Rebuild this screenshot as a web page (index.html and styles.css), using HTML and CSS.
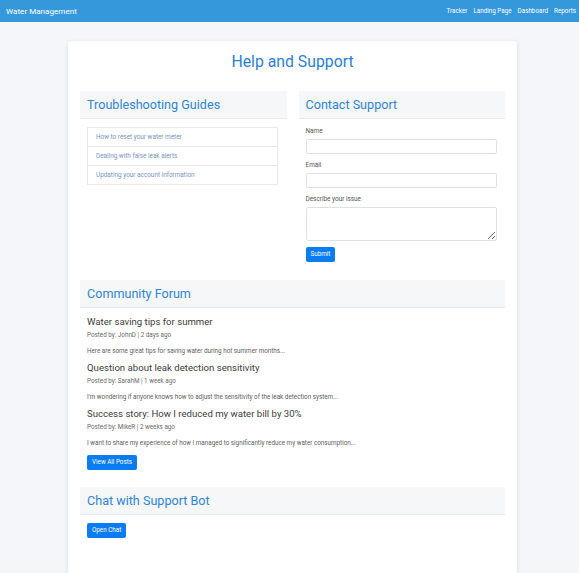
FILE: index.html
```html
<!DOCTYPE html>
<html lang="en">
<head>
<meta charset="utf-8">
<title>Help and Support</title>
<link rel="stylesheet" href="styles.css">
</head>
<body>
<nav class="navbar">
  <span class="brand">Water Management</span>
  <ul class="nav-links">
    <li>Tracker</li>
    <li>Landing Page</li>
    <li>Dashboard</li>
    <li>Reports</li>
  </ul>
</nav>
<div class="wrapper">
  <main class="card">
    <h1 class="page-title">Help and Support</h1>
    <div class="row">
      <section class="section">
        <h2 class="section-header">Troubleshooting Guides</h2>
        <div class="section-body">
          <ul class="guide-list">
            <li>How to reset your water meter</li>
            <li>Dealing with false leak alerts</li>
            <li>Updating your account information</li>
          </ul>
        </div>
      </section>
      <section class="section">
        <h2 class="section-header">Contact Support</h2>
        <form class="section-body form">
          <label class="label">Name</label>
          <input class="input" type="text">
          <label class="label">Email</label>
          <input class="input" type="email">
          <label class="label">Describe your issue</label>
          <textarea class="input textarea"></textarea>
          <div><button class="btn" type="button">Submit</button></div>
        </form>
      </section>
    </div>
    <section class="section forum">
      <h2 class="section-header">Community Forum</h2>
      <div class="section-body">
        <article class="post">
          <h3 class="post-title">Water saving tips for summer</h3>
          <p class="post-meta">Posted by: JohnD | 2 days ago</p>
          <p class="post-text">Here are some great tips for saving water during hot summer months...</p>
        </article>
        <article class="post">
          <h3 class="post-title">Question about leak detection sensitivity</h3>
          <p class="post-meta">Posted by: SarahM | 1 week ago</p>
          <p class="post-text">I'm wondering if anyone knows how to adjust the sensitivity of the leak detection system...</p>
        </article>
        <article class="post">
          <h3 class="post-title">Success story: How I reduced my water bill by 30%</h3>
          <p class="post-meta">Posted by: MikeR | 2 weeks ago</p>
          <p class="post-text">I want to share my experience of how I managed to significantly reduce my water consumption...</p>
        </article>
        <button class="btn" type="button">View All Posts</button>
      </div>
    </section>
    <section class="section chat">
      <h2 class="section-header">Chat with Support Bot</h2>
      <div class="section-body">
        <button class="btn" type="button">Open Chat</button>
      </div>
    </section>
  </main>
</div>
</body>
</html>
```
FILE: styles.css
```css
* { box-sizing: border-box; }
html, body { margin: 0; padding: 0; }
body {
  background: #f4f6f9;
  font-family: Roboto, "Liberation Sans", sans-serif;
  color: #333;
}
.navbar {
  height: 22px;
  background: #3498db;
  display: flex;
  align-items: center;
  justify-content: space-between;
  padding: 0 3px 0 6px;
  color: #fff;
}
.brand { font-size: 8.1px; }
.nav-links {
  list-style: none;
  margin: 0;
  padding: 0;
  display: flex;
  gap: 6px;
  font-size: 6.3px;
}
.wrapper { padding: 19px 0 0 6px; }
.card {
  width: 449px;
  margin: 0 auto;
  background: #fff;
  border-radius: 3px;
  box-shadow: 0 1px 4px rgba(0,0,0,0.12);
  padding: 11px 12px 40px;
}
.page-title {
  margin: 0;
  text-align: center;
  font-weight: 400;
  font-size: 15.8px;
  line-height: 20px;
  color: #2b7fd2;
}
.row {
  display: grid;
  grid-template-columns: 1fr 1fr;
  gap: 12px;
  margin-top: 19px;
}
.section-header {
  margin: 0;
  height: 28px;
  line-height: 27px;
  padding: 0 7px;
  font-size: 12.6px;
  font-weight: 400;
  color: #2f84d4;
  background: #f5f7f9;
  border-bottom: 1px solid #e6e9ec;
}
.section-body { padding: 0 8px 0 7px; }
.guide-list {
  list-style: none;
  margin: 8px 1px 0 0;
  padding: 0;
  border: 1px solid #e8e8e8;
  border-bottom: none;
}
.guide-list li {
  height: 19px;
  line-height: 18px;
  padding: 0 8px;
  font-size: 6.4px;
  color: #7896bd;
  border-bottom: 1px solid #e8e8e8;
}
.form { display: flex; flex-direction: column; }
.label {
  font-size: 6.4px;
  line-height: 8px;
  color: #555;
  margin-top: 7px;
}
.form .label:first-child { margin-top: 8px; }
.input {
  display: block;
  margin-top: 4px;
  height: 15px;
  width: 100%;
  border: 1px solid #dde1e6;
  border-radius: 2px;
  background: #fff;
  padding: 0;
  font: inherit;
}
.textarea { height: 34px; resize: vertical; }
.btn {
  display: inline-block;
  border: none;
  border-radius: 2px;
  background: #0a7cf2;
  color: #fff;
  font-family: inherit;
  font-size: 6.3px;
  height: 15px;
  line-height: 15px;
  padding: 0 5px;
  cursor: pointer;
}
.form .btn { margin-top: 6px; }
.forum { margin-top: 18px; }
.post-title {
  margin: 8px 0 0;
  font-size: 9.6px;
  line-height: 12px;
  font-weight: 400;
  color: #3c3c3c;
}
.post + .post .post-title { margin-top: 7px; }
.post-meta {
  margin: 3px 0 0;
  font-size: 6.3px;
  line-height: 8px;
  color: #6a6a6a;
}
.post-text {
  margin: 8px 0 0;
  font-size: 6.3px;
  line-height: 8px;
  color: #5e5e5e;
}
.forum .btn { margin-top: 8px; }
.chat { margin-top: 17px; }
.chat .btn { margin-top: 8px; }
```
